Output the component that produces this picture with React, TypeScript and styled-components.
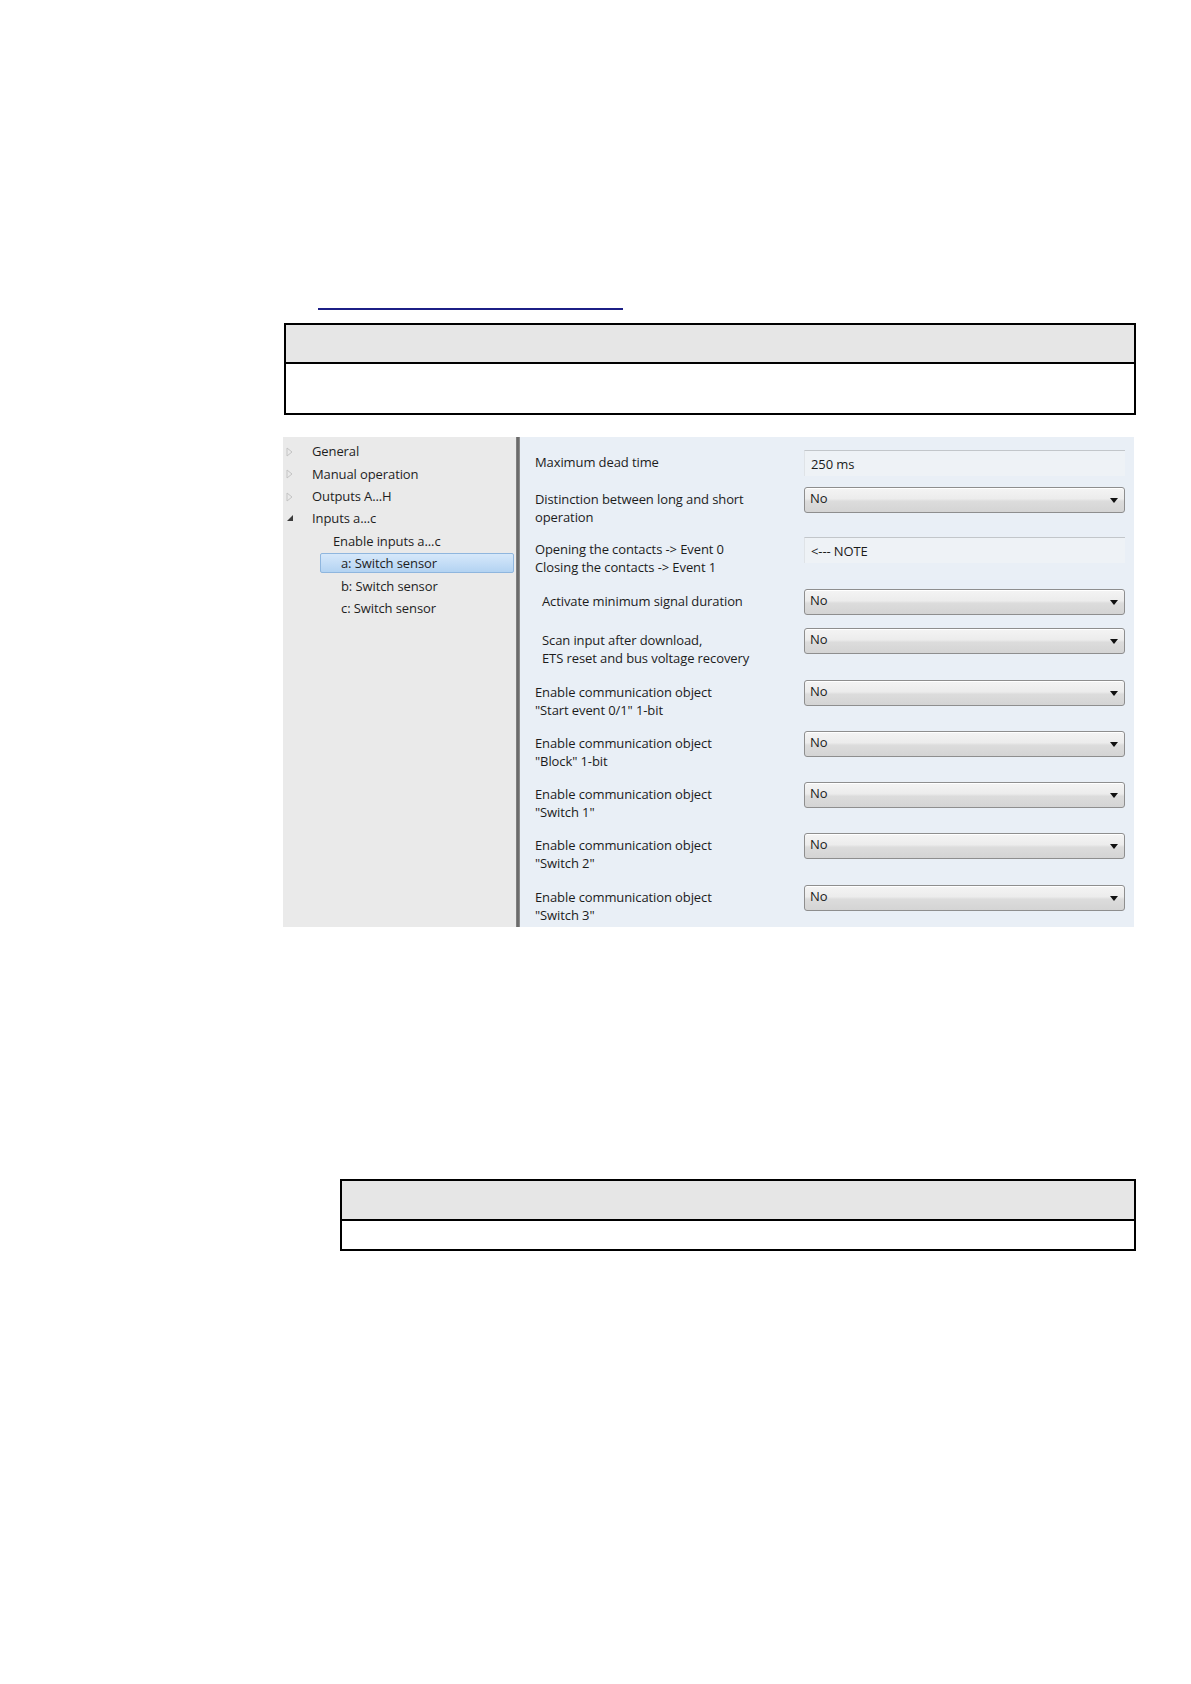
import React from "react";
import styled, { createGlobalStyle, css } from "styled-components";

const Global = createGlobalStyle`
  html, body { margin: 0; padding: 0; background: #ffffff; }
  body { font-family: "Open Sans", "Noto Sans", sans-serif; color: #1b1b1b; }
`;

const Page = styled.div`
  width: 1191px;
  height: 1684px;
  box-sizing: border-box;
  padding-top: 300px;
  display: flex;
  flex-direction: column;
`;

const LinkLine = styled.a`
  display: block;
  margin-left: 318px;
  width: 305px;
  height: 8px;
  border-bottom: 2px solid #1c1f86;
`;

const SpecTable = styled.div<{ $left: number; $headH: number; $bodyH: number; $top: number }>`
  margin-left: ${(p) => p.$left}px;
  margin-top: ${(p) => p.$top}px;
  width: ${(p) => 1136 - p.$left}px;
  box-sizing: border-box;
  border: 2px solid #000;
  display: grid;
  grid-template-rows: ${(p) => p.$headH}px ${(p) => p.$bodyH}px;
`;

const SpecHead = styled.div`
  background: #e6e6e6;
  border-bottom: 2px solid #000;
`;

const SpecBody = styled.div`
  background: #ffffff;
`;

const Window = styled.div`
  margin-left: 283px;
  margin-top: 22px;
  width: 851px;
  height: 490px;
  display: grid;
  grid-template-columns: 233px 4px 1fr;
  overflow: hidden;
  font-size: 13px;
  letter-spacing: -0.1px;
`;

const Tree = styled.div`
  background: #eaeaea;
  padding-top: 3px;
  display: flex;
  flex-direction: column;
`;

const TreeItem = styled.div<{ $indent: number; $selected?: boolean }>`
  height: 22.4px;
  display: flex;
  align-items: center;
  position: relative;
  padding-left: ${(p) => p.$indent}px;
  white-space: nowrap;
  ${(p) =>
    p.$selected &&
    css`
      &::before {
        content: "";
        position: absolute;
        left: 37px;
        right: 2px;
        top: 1px;
        bottom: 1px;
        border: 1px solid #8fb6de;
        border-radius: 2px;
        background: linear-gradient(#d6e8fa, #b3d3f2);
      }
    `}
`;

const TreeText = styled.span`
  position: relative;
  color: #1e1e1e;
`;

const Expander = styled.svg`
  position: absolute;
  left: 3px;
  top: 7px;
`;

const Divider = styled.div`
  background: linear-gradient(90deg, #8a8a8a, #5f5f5f 50%, #9a9a9a);
`;

const Params = styled.div`
  background: #e9eff6;
  padding: 13px 9px 0 15px;
  display: flex;
  flex-direction: column;
`;

const Row = styled.div<{ $h: number }>`
  height: ${(p) => p.$h}px;
  flex: none;
  display: grid;
  grid-template-columns: 269px 321px;
  align-items: start;
`;

const Label = styled.div<{ $indent?: boolean }>`
  padding-top: 4px;
  padding-left: ${(p) => (p.$indent ? 7 : 0)}px;
  line-height: 17.5px;
  white-space: pre-line;
  color: #1c1c1c;
`;

const Field = styled.div`
  height: 26px;
  box-sizing: border-box;
  background: #eef2f6;
  border-top: 1px solid #c2c6ca;
  border-left: 1px solid #dfe3e7;
  padding: 0 6px;
  display: flex;
  align-items: center;
`;

const Select = styled.div`
  height: 26px;
  box-sizing: border-box;
  border: 1px solid #8e8e8e;
  border-radius: 3px;
  background: linear-gradient(#f4f4f4 0%, #ececec 45%, #dcdcdc 55%, #d4d4d4 100%);
  padding: 0 6px 0 5px;
  display: flex;
  align-items: center;
  justify-content: space-between;
  box-shadow: inset 0 1px 0 #ffffff;
`;

const SelectText = styled.span`
  margin-top: -4px;
`;

const Caret = () => (
  <svg width="8" height="5" viewBox="0 0 8 5">
    <path d="M0 0 L8 0 L4 5 Z" fill="#111" />
  </svg>
);

const Closed = () => (
  <Expander width="7" height="10" viewBox="0 0 7 10">
    <path d="M1 1 L6 5 L1 9 Z" fill="none" stroke="#c4c4c4" strokeWidth="1" />
  </Expander>
);

const Open = () => (
  <Expander width="8" height="8" viewBox="0 0 8 8">
    <path d="M7 1 L7 7 L1 7 Z" fill="#3c3c3c" />
  </Expander>
);

type P = { label: string; kind: "field" | "select"; value: string; h: number; indent?: boolean };

const params: P[] = [
  { label: "Maximum dead time", kind: "field", value: "250 ms", h: 37 },
  { label: "Distinction between long and short\noperation", kind: "select", value: "No", h: 50 },
  { label: "Opening the contacts -> Event 0\nClosing the contacts -> Event 1", kind: "field", value: "<--- NOTE", h: 52 },
  { label: "Activate minimum signal duration", kind: "select", value: "No", h: 39, indent: true },
  { label: "Scan input after download,\nETS reset and bus voltage recovery", kind: "select", value: "No", h: 52, indent: true },
  { label: "Enable communication object\n\"Start event 0/1\" 1-bit", kind: "select", value: "No", h: 51 },
  { label: "Enable communication object\n\"Block\" 1-bit", kind: "select", value: "No", h: 51 },
  { label: "Enable communication object\n\"Switch 1\"", kind: "select", value: "No", h: 51 },
  { label: "Enable communication object\n\"Switch 2\"", kind: "select", value: "No", h: 52 },
  { label: "Enable communication object\n\"Switch 3\"", kind: "select", value: "No", h: 52 },
];

const tree = [
  { text: "General", indent: 29, icon: "closed" },
  { text: "Manual operation", indent: 29, icon: "closed" },
  { text: "Outputs A...H", indent: 29, icon: "closed" },
  { text: "Inputs a...c", indent: 29, icon: "open" },
  { text: "Enable inputs a...c", indent: 50, icon: "" },
  { text: "a: Switch sensor", indent: 58, icon: "", selected: true },
  { text: "b: Switch sensor", indent: 58, icon: "" },
  { text: "c: Switch sensor", indent: 58, icon: "" },
];

export default function App() {
  return (
    <Page>
      <Global />
      <LinkLine href="#" aria-label="link" />
      <SpecTable $left={284} $top={13} $headH={39} $bodyH={49}>
        <SpecHead />
        <SpecBody />
      </SpecTable>
      <Window>
        <Tree>
          {tree.map((t) => (
            <TreeItem key={t.text} $indent={t.indent} $selected={t.selected}>
              {t.icon === "closed" && <Closed />}
              {t.icon === "open" && <Open />}
              <TreeText>{t.text}</TreeText>
            </TreeItem>
          ))}
        </Tree>
        <Divider />
        <Params>
          {params.map((p) => (
            <Row key={p.label} $h={p.h}>
              <Label $indent={p.indent}>{p.label}</Label>
              {p.kind === "field" ? (
                <Field>{p.value}</Field>
              ) : (
                <Select>
                  <SelectText>{p.value}</SelectText>
                  <Caret />
                </Select>
              )}
            </Row>
          ))}
        </Params>
      </Window>
      <SpecTable $left={340} $top={252} $headH={40} $bodyH={28}>
        <SpecHead />
        <SpecBody />
      </SpecTable>
    </Page>
  );
}
